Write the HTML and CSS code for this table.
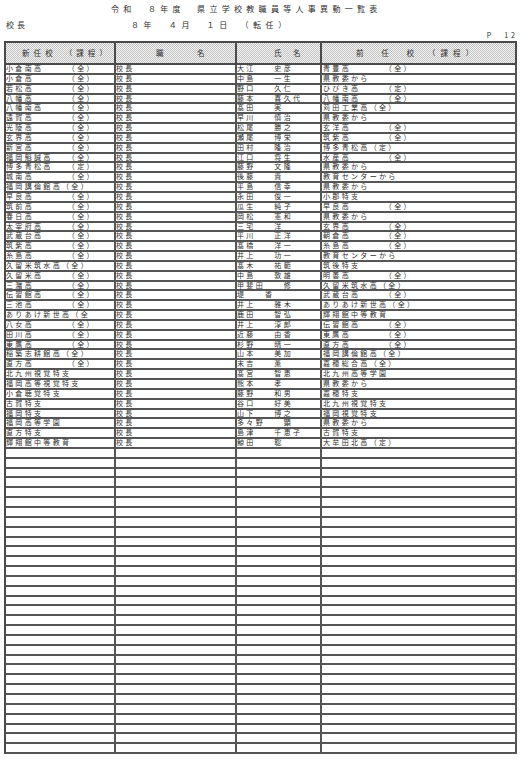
FILE: index.html
```html
<!DOCTYPE html>
<html lang="ja">
<head>
<meta charset="utf-8">
<title>県立学校教職員等人事異動一覧表</title>
<link rel="stylesheet" href="styles.css">
</head>
<body>
<div class="title">令和　８年度　県立学校教職員等人事異動一覧表</div>
<div class="sub"><span class="kind">校長</span><span class="date">８年　４月　１日　（転任）</span></div>
<div class="page">P<span class="num">12</span></div>
<div class="table">
  <div class="head">
    <div class="h1">新任校　（課程）</div>
    <div class="h2">職　　名</div>
    <div class="h3">氏　名</div>
    <div class="h4">前　任　校　（課程）</div>
  </div>
  <div class="row"><div>小倉南高　　　（全）</div><div>校長</div><div>大江　　史彦</div><div>青豊高　　　　（全）</div></div>
  <div class="row"><div>小倉高　　　　（全）</div><div>校長</div><div>中島　　一生</div><div>県教委から</div></div>
  <div class="row"><div>若松高　　　　（全）</div><div>校長</div><div>野口　　久仁</div><div>ひびき高　　　（定）</div></div>
  <div class="row"><div>八幡高　　　　（全）</div><div>校長</div><div>藤本　　喜久代</div><div>八幡南高　　　（全）</div></div>
  <div class="row"><div>八幡南高　　　（全）</div><div>校長</div><div>髙田　　実</div><div>苅田工業高（全）</div></div>
  <div class="row"><div>遠賀高　　　　（全）</div><div>校長</div><div>早川　　慎治</div><div>県教委から</div></div>
  <div class="row"><div>光陵高　　　　（全）</div><div>校長</div><div>松尾　　勝之</div><div>玄洋高　　　　（全）</div></div>
  <div class="row"><div>玄界高　　　　（全）</div><div>校長</div><div>瀬尾　　博栄</div><div>筑紫高　　　　（全）</div></div>
  <div class="row"><div>新宮高　　　　（全）</div><div>校長</div><div>田村　　隆治</div><div>博多青松高（定）</div></div>
  <div class="row"><div>福岡魁誠高　　（全）</div><div>校長</div><div>江口　　将生</div><div>水産高　　　　（全）</div></div>
  <div class="row"><div>博多青松高　　（定）</div><div>校長</div><div>藤野　　文隆</div><div>県教委から</div></div>
  <div class="row"><div>城南高　　　　（全）</div><div>校長</div><div>後藤　　貴</div><div>教育センターから</div></div>
  <div class="row"><div>福岡講倫館高（全）</div><div>校長</div><div>平島　　信幸</div><div>県教委から</div></div>
  <div class="row"><div>早良高　　　　（全）</div><div>校長</div><div>永田　　俊一</div><div>小郡特支</div></div>
  <div class="row"><div>筑前高　　　　（全）</div><div>校長</div><div>瓜生　　純子</div><div>早良高　　　　（全）</div></div>
  <div class="row"><div>春日高　　　　（全）</div><div>校長</div><div>岡松　　憲和</div><div>県教委から</div></div>
  <div class="row"><div>太宰府高　　　（全）</div><div>校長</div><div>三宅　　洋</div><div>玄界高　　　　（全）</div></div>
  <div class="row"><div>武蔵台高　　　（全）</div><div>校長</div><div>平川　　正洋</div><div>朝倉高　　　　（全）</div></div>
  <div class="row"><div>筑紫高　　　　（全）</div><div>校長</div><div>髙橋　　洋一</div><div>糸島高　　　　（全）</div></div>
  <div class="row"><div>糸島高　　　　（全）</div><div>校長</div><div>井上　　功一</div><div>教育センターから</div></div>
  <div class="row"><div>久留米筑水高（全）</div><div>校長</div><div>髙木　　祐範</div><div>筑後特支</div></div>
  <div class="row"><div>久留米高　　　（全）</div><div>校長</div><div>中島　　敦雄</div><div>明善高　　　　（全）</div></div>
  <div class="row"><div>三潴高　　　　（全）</div><div>校長</div><div>甲斐田　　修</div><div>久留米筑水高（全）</div></div>
  <div class="row"><div>伝習館高　　　（全）</div><div>校長</div><div>堤　　香</div><div>武蔵台高　　　（全）</div></div>
  <div class="row"><div>三池高　　　　（全）</div><div>校長</div><div>井上　　雅木</div><div>ありあけ新世高（全）</div></div>
  <div class="row"><div>ありあけ新世高（全</div><div>校長</div><div>鹿田　　智弘</div><div>輝翔館中等教育</div></div>
  <div class="row"><div>八女高　　　　（全）</div><div>校長</div><div>井上　　淳郎</div><div>伝習館高　　　（全）</div></div>
  <div class="row"><div>田川高　　　　（全）</div><div>校長</div><div>近藤　　由香</div><div>東鷹高　　　　（全）</div></div>
  <div class="row"><div>東鷹高　　　　（全）</div><div>校長</div><div>杉野　　晴一</div><div>直方高　　　　（全）</div></div>
  <div class="row"><div>稲築志耕館高（全）</div><div>校長</div><div>山本　　美加</div><div>福岡講倫館高（全）</div></div>
  <div class="row"><div>直方高　　　　（全）</div><div>校長</div><div>末吉　　薫</div><div>嘉穂総合高（全）</div></div>
  <div class="row"><div>北九州視覚特支</div><div>校長</div><div>髙宮　　智恵</div><div>北九州高等学園</div></div>
  <div class="row"><div>福岡高等視覚特支</div><div>校長</div><div>熊本　　孝</div><div>県教委から</div></div>
  <div class="row"><div>小倉聴覚特支</div><div>校長</div><div>藤野　　和男</div><div>嘉穂特支</div></div>
  <div class="row"><div>古賀特支</div><div>校長</div><div>谷口　　好美</div><div>北九州視覚特支</div></div>
  <div class="row"><div>福岡特支</div><div>校長</div><div>山下　　博之</div><div>福岡視覚特支</div></div>
  <div class="row"><div>福岡高等学園</div><div>校長</div><div>多々野　　顕</div><div>県教委から</div></div>
  <div class="row"><div>直方特支</div><div>校長</div><div>島津　　千恵子</div><div>古賀特支</div></div>
  <div class="row"><div>輝翔館中等教育</div><div>校長</div><div>鯨田　　聡</div><div>大牟田北高（定）</div></div>
  <div class="row"><div></div><div></div><div></div><div></div></div>
  <div class="row"><div></div><div></div><div></div><div></div></div>
  <div class="row"><div></div><div></div><div></div><div></div></div>
  <div class="row"><div></div><div></div><div></div><div></div></div>
  <div class="row"><div></div><div></div><div></div><div></div></div>
  <div class="row"><div></div><div></div><div></div><div></div></div>
  <div class="row"><div></div><div></div><div></div><div></div></div>
  <div class="row"><div></div><div></div><div></div><div></div></div>
  <div class="row"><div></div><div></div><div></div><div></div></div>
  <div class="row"><div></div><div></div><div></div><div></div></div>
  <div class="row"><div></div><div></div><div></div><div></div></div>
  <div class="row"><div></div><div></div><div></div><div></div></div>
  <div class="row"><div></div><div></div><div></div><div></div></div>
  <div class="row"><div></div><div></div><div></div><div></div></div>
  <div class="row"><div></div><div></div><div></div><div></div></div>
  <div class="row"><div></div><div></div><div></div><div></div></div>
  <div class="row"><div></div><div></div><div></div><div></div></div>
  <div class="row"><div></div><div></div><div></div><div></div></div>
  <div class="row"><div></div><div></div><div></div><div></div></div>
  <div class="row"><div></div><div></div><div></div><div></div></div>
  <div class="row"><div></div><div></div><div></div><div></div></div>
  <div class="row"><div></div><div></div><div></div><div></div></div>
  <div class="row"><div></div><div></div><div></div><div></div></div>
  <div class="row"><div></div><div></div><div></div><div></div></div>
  <div class="row"><div></div><div></div><div></div><div></div></div>
  <div class="row"><div></div><div></div><div></div><div></div></div>
  <div class="row"><div></div><div></div><div></div><div></div></div>
  <div class="row"><div></div><div></div><div></div><div></div></div>
  <div class="row"><div></div><div></div><div></div><div></div></div>
  <div class="row"><div></div><div></div><div></div><div></div></div>
  <div class="row"><div></div><div></div><div></div><div></div></div>
</div>
</body>
</html>
```
FILE: styles.css
```css
html, body {
  margin: 0;
  padding: 0;
  background: #ffffff;
}
body {
  font-family: "Noto Sans CJK JP", "Noto Sans", sans-serif;
  color: #2e2e2e;
}
.title {
  height: 18px;
  line-height: 18px;
  padding-left: 111px;
  font-size: 8px;
  letter-spacing: 4.3px;
  white-space: pre;
}
.sub {
  display: flex;
  height: 13px;
  line-height: 13px;
  font-size: 8px;
  white-space: pre;
}
.sub .kind {
  box-sizing: border-box;
  width: 131px;
  padding-left: 6px;
  letter-spacing: 3px;
}
.sub .date {
  letter-spacing: 4.6px;
}
.page {
  height: 8px;
  line-height: 8px;
  font-size: 7px;
  text-align: right;
  padding-right: 3px;
  white-space: pre;
}
.page .num {
  margin-left: 13px;
  letter-spacing: 3px;
}
.table {
  box-sizing: border-box;
  width: 513px;
  margin: 2px 0 0 4px;
  border-left: 2px solid #4a4a4a;
  border-top: 2px solid #4a4a4a;
}
.head, .row {
  display: grid;
  grid-template-columns: 110px 121px 85px 195px;
}
.head {
  height: 22px;
}
.head > div {
  box-sizing: border-box;
  border-right: 2px solid #4a4a4a;
  border-bottom: 2px solid #4a4a4a;
  background: repeating-conic-gradient(#c2c2c2 0 25%, #f3f3f3 0 50%) 0 0 / 2px 2px;
  font-size: 7.5px;
  line-height: 20px;
  white-space: pre;
}
.head .h1 { padding-left: 16px; letter-spacing: 4.1px; }
.head .h2 { padding-left: 40px; letter-spacing: 6.2px; }
.head .h3 { padding-left: 37px; letter-spacing: 2px; }
.head .h4 { padding-left: 34px; letter-spacing: 5.1px; }
.row {
  height: 9.857px;
}
.row > div {
  box-sizing: border-box;
  border-right: 2px solid #555555;
  border-bottom: 2px solid #555555;
  font-size: 7px;
  line-height: 7.857px;
  letter-spacing: 2.33px;
  white-space: pre;
}
.row > div:nth-child(4) {
  padding-left: 1px;
}
```
